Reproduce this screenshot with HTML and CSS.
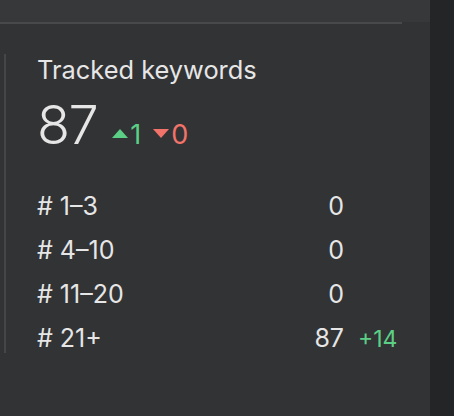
FILE: index.html
```html
<!DOCTYPE html>
<html>
<head>
<title>Tracked keywords</title>
<link rel="stylesheet" href="styles.css">
</head>
<body>
<div class="layout">
    <div class="main">
        <div class="topbar"></div>
        <div class="divider"></div>
        <div class="card">
            <div class="title">Tracked keywords</div>
            <div class="summary">
                <span class="total">87</span>
                <span class="change up"><span class="tri tri-up"></span>1</span>
                <span class="change down"><span class="tri tri-down"></span>0</span>
            </div>
            <div class="rows">
                <div class="row"><span class="label"># 1–3</span><span class="value">0</span><span class="delta"></span></div>
                <div class="row"><span class="label"># 4–10</span><span class="value">0</span><span class="delta"></span></div>
                <div class="row"><span class="label"># 11–20</span><span class="value">0</span><span class="delta"></span></div>
                <div class="row"><span class="label"># 21+</span><span class="value">87</span><span class="delta">+14</span></div>
            </div>
        </div>
    </div>
    <div class="sidebar"></div>
</div>
</body>
</html>
```

FILE: styles.css
```css
html, body {
    margin: 0;
    height: 100%;
}

body {
    background: #323335;
    font-family: Inter, "Noto Sans", sans-serif;
    color: #e6e6e6;
}

.layout {
    display: flex;
    height: 100%;
}

.main {
    width: 430px;
    flex: none;
}

.sidebar {
    flex: 1;
    background: #242527;
}

.topbar {
    height: 22px;
    background: #37383a;
}

.divider {
    width: 402px;
    height: 2px;
    background: #48494b;
}

.card {
    margin: 30px 0 0 4px;
    padding: 1px 0 0 31px;
    border-left: 2px solid #454648;
    height: 298px;
}

.title {
    font-size: 25.4px;
    line-height: 30px;
}

.summary {
    display: flex;
    align-items: baseline;
    margin-top: 13px;
    height: 54px;
}

.total {
    font-size: 54px;
    font-weight: 300;
    line-height: 54px;
    letter-spacing: -1.5px;
}

.change {
    font-size: 27px;
    margin-left: 15px;
}

.change.down {
    margin-left: 12px;
}

.up { color: #5ccf86; }
.down { color: #f2736a; }

.tri {
    display: inline-block;
    width: 0;
    height: 0;
    border-left: 8px solid transparent;
    border-right: 8px solid transparent;
    vertical-align: 6px;
    margin-right: 2px;
}

.tri-up {
    border-bottom: 9px solid #5ccf86;
}

.tri-down {
    border-top: 9px solid #f2736a;
}

.rows {
    margin-top: 39px;
}

.row {
    display: flex;
    align-items: baseline;
    height: 44px;
    font-size: 25px;
    line-height: 30px;
}

.label {
    width: 250px;
}

.value {
    width: 57px;
    text-align: right;
}

.delta {
    margin-left: 14px;
    font-size: 23px;
    color: #5ccf86;
}
```
